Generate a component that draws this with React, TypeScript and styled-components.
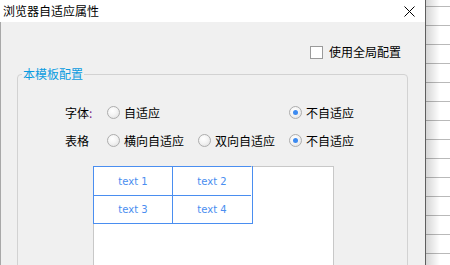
import React, { useState } from "react";
import styled, { createGlobalStyle } from "styled-components";

const GlobalStyle = createGlobalStyle`
  html, body {
    margin: 0;
    padding: 0;
    height: 265px;
    overflow: hidden;
    background: #ffffff;
    font-family: "Noto Sans CJK SC", "Microsoft YaHei", sans-serif;
    font-size: 12px;
    color: #000;
  }
`;

const Screen = styled.div`
  display: flex;
  height: 265px;
`;

const Dialog = styled.div`
  width: 425px;
  display: flex;
  flex-direction: column;
  border-right: 1px solid #5e5e5e;
  overflow: hidden;
`;

const TitleBar = styled.div`
  height: 22px;
  flex-shrink: 0;
  background: #ffffff;
  display: flex;
  align-items: center;
  justify-content: space-between;
  padding: 0 10px 0 3px;
  font-size: 12px;
  line-height: 22px;
`;

const CloseButton = styled.span`
  display: flex;
  align-items: center;
  cursor: pointer;
`;

const Body = styled.div`
  flex: 1;
  background: #f0f0f0;
  border-left: 1px solid #a8a8a8;
  padding: 24px 17px 0 16px;
  display: flex;
  flex-direction: column;
  overflow: hidden;
`;

const TopRow = styled.div`
  display: flex;
  justify-content: flex-end;
  padding-right: 7px;
  height: 12px;
  flex-shrink: 0;
`;

const Check = styled.label`
  display: flex;
  align-items: center;
  gap: 6px;
  line-height: 12px;
  cursor: pointer;
`;

const CheckBox = styled.span<{ $on: boolean }>`
  width: 11px;
  height: 11px;
  border: 1px solid #9a9a9a;
  background: #ffffff;
  display: inline-flex;
  align-items: center;
  justify-content: center;
  color: #333;
  font-size: 10px;
`;

const Group = styled.fieldset`
  margin: 9px 0 0 0;
  padding: 0 0 0 4px;
  border: 1px solid #d2d2d2;
  border-radius: 4px;
  flex-shrink: 0;
  min-width: 0;
`;

const Legend = styled.legend`
  padding: 0 1px;
  color: #0a9be0;
  font-size: 12px;
  line-height: 14px;
`;

const Options = styled.div`
  display: grid;
  grid-template-columns: 42px 91px 91px auto;
  grid-auto-rows: 28px;
  align-items: center;
  margin: 17px 0 0 43px;
`;

const Label = styled.span`
  white-space: nowrap;
`;

const Colon = styled.span`
  color: #7a2a8a;
`;

const RadioItem = styled.label<{ $col: number }>`
  grid-column: ${p => p.$col};
  display: flex;
  align-items: center;
  gap: 4px;
  white-space: nowrap;
  cursor: pointer;
`;

const RadioDot = styled.span<{ $on: boolean }>`
  width: 11px;
  height: 11px;
  border-radius: 50%;
  border: 1px solid #adadad;
  background: radial-gradient(circle at 40% 35%, #ffffff 0%, #f4f4f4 45%, #dcdcdc 100%);
  display: flex;
  align-items: center;
  justify-content: center;
  &::after {
    content: "";
    display: ${p => (p.$on ? "block" : "none")};
    width: 5px;
    height: 5px;
    border-radius: 50%;
    background: #3c8af0;
  }
`;

const Preview = styled.div`
  margin: 12px 0 0 71px;
  width: 239px;
  height: 120px;
  background: #ffffff;
  border: 1px solid #c8c8c8;
  border-bottom: none;
`;

const Table = styled.div`
  margin: -1px 0 0 -1px;
  display: grid;
  grid-template-columns: 79px 79px;
  grid-template-rows: 29px 28px;
  width: 159px;
  border-right: 1px solid #4a8ef0;
  border-bottom: 1px solid #4a8ef0;
`;

const Cell = styled.div`
  border-left: 1px solid #4a8ef0;
  border-top: 1px solid #4a8ef0;
  display: flex;
  align-items: center;
  justify-content: center;
  color: #4a8ef0;
  font-family: "DejaVu Sans", sans-serif;
  font-size: 10px;
`;

const Sheet = styled.div`
  flex: 1;
  background:
    linear-gradient(to right, rgba(0, 0, 0, 0.16), rgba(0, 0, 0, 0) 14px),
    repeating-linear-gradient(
      to bottom,
      transparent 0px,
      transparent 5px,
      #b9b9b9 5px,
      #b9b9b9 6px,
      transparent 6px,
      transparent 19px
    );
  background-color: #ffffff;
  background-position: 0 0, 0 1px;
`;

type Choice = { text: string; col: number; value: string };

const fontChoices: Choice[] = [
  { text: "自适应", col: 2, value: "auto" },
  { text: "不自适应", col: 4, value: "none" },
];

const tableChoices: Choice[] = [
  { text: "横向自适应", col: 2, value: "h" },
  { text: "双向自适应", col: 3, value: "both" },
  { text: "不自适应", col: 4, value: "none" },
];

const App: React.FC = () => {
  const [global, setGlobal] = useState(false);
  const [font, setFont] = useState("none");
  const [table, setTable] = useState("none");

  return (
    <>
      <GlobalStyle />
      <Screen>
        <Dialog>
          <TitleBar>
            <span>浏览器自适应属性</span>
            <CloseButton>
              <svg width="11" height="11" viewBox="0 0 11 11">
                <path d="M0.5 0.5 L10.5 10.5 M10.5 0.5 L0.5 10.5" stroke="#000" strokeWidth="1" />
              </svg>
            </CloseButton>
          </TitleBar>
          <Body>
            <TopRow>
              <Check onClick={() => setGlobal(!global)}>
                <CheckBox $on={global}>{global ? "✓" : ""}</CheckBox>
                使用全局配置
              </Check>
            </TopRow>
            <Group>
              <Legend>本模板配置</Legend>
              <Options>
                <Label>
                  字体<Colon>:</Colon>
                </Label>
                {fontChoices.map(c => (
                  <RadioItem key={c.value} $col={c.col} onClick={() => setFont(c.value)}>
                    <RadioDot $on={font === c.value} />
                    {c.text}
                  </RadioItem>
                ))}
                <Label>表格</Label>
                {tableChoices.map(c => (
                  <RadioItem key={c.value} $col={c.col} onClick={() => setTable(c.value)}>
                    <RadioDot $on={table === c.value} />
                    {c.text}
                  </RadioItem>
                ))}
              </Options>
              <Preview>
                <Table>
                  <Cell>text 1</Cell>
                  <Cell>text 2</Cell>
                  <Cell>text 3</Cell>
                  <Cell>text 4</Cell>
                </Table>
              </Preview>
            </Group>
          </Body>
        </Dialog>
        <Sheet />
      </Screen>
    </>
  );
};

export default App;
